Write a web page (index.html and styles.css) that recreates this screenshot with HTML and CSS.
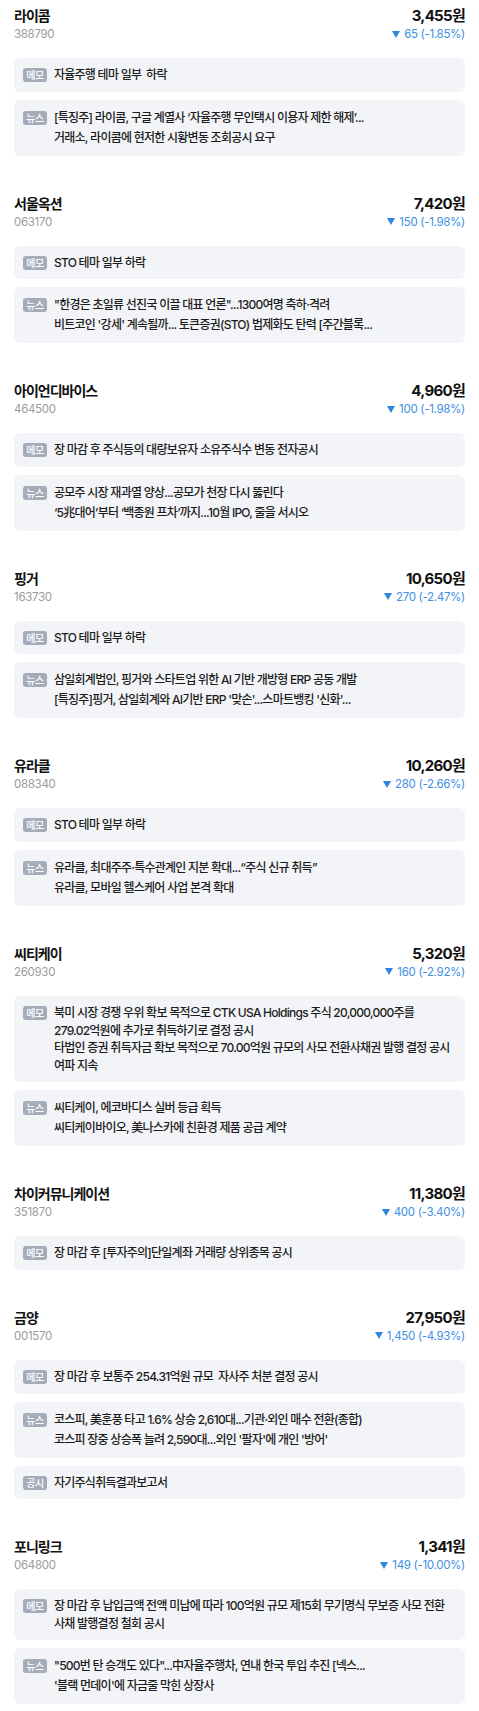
FILE: index.html
```html
<!DOCTYPE html>
<html lang="ko">
<head>
    <meta charset="UTF-8">
    <meta name="viewport" content="width=device-width, initial-scale=1.0">
    <title>관심종목 메모</title>
    <link rel="stylesheet" href="styles.css">
</head>
<body>

<main class="stock-list">

    <section class="stock">
        <div class="stock-head">
            <div class="stock-id">
                <h2 class="stock-name">라이콤</h2>
                <span class="stock-code">388790</span>
            </div>
            <div class="stock-quote">
                <span class="price">3,455원</span>
                <span class="change"><svg class="arrow" viewBox="0 0 8 7"><path d="M0 0H8L4 7Z"/></svg>65 (-1.85%)</span>
            </div>
        </div>
        <div class="notes">
            <div class="note">
                <span class="tag">메모</span>
                <p class="memo">자율주행 테마 일부&nbsp; 하락</p>
            </div>
            <div class="note">
                <span class="tag tag-news">뉴스</span>
                <ul class="headlines">
                    <li>[특징주] 라이콤, 구글 계열사 ‘자율주행 무인택시 이용자 제한 해제’...</li>
                    <li>거래소, 라이콤에 현저한 시황변동 조회공시 요구</li>
                </ul>
            </div>
        </div>
    </section>

    <section class="stock">
        <div class="stock-head">
            <div class="stock-id">
                <h2 class="stock-name">서울옥션</h2>
                <span class="stock-code">063170</span>
            </div>
            <div class="stock-quote">
                <span class="price">7,420원</span>
                <span class="change"><svg class="arrow" viewBox="0 0 8 7"><path d="M0 0H8L4 7Z"/></svg>150 (-1.98%)</span>
            </div>
        </div>
        <div class="notes">
            <div class="note">
                <span class="tag">메모</span>
                <p class="memo">STO 테마 일부 하락</p>
            </div>
            <div class="note">
                <span class="tag tag-news">뉴스</span>
                <ul class="headlines">
                    <li>"한경은 초일류 선진국 이끌 대표 언론"...1300여명 축하·격려</li>
                    <li>비트코인 '강세' 계속될까... 토큰증권(STO) 법제화도 탄력 [주간블록...</li>
                </ul>
            </div>
        </div>
    </section>

    <section class="stock">
        <div class="stock-head">
            <div class="stock-id">
                <h2 class="stock-name">아이언디바이스</h2>
                <span class="stock-code">464500</span>
            </div>
            <div class="stock-quote">
                <span class="price">4,960원</span>
                <span class="change"><svg class="arrow" viewBox="0 0 8 7"><path d="M0 0H8L4 7Z"/></svg>100 (-1.98%)</span>
            </div>
        </div>
        <div class="notes">
            <div class="note">
                <span class="tag">메모</span>
                <p class="memo">장 마감 후 주식등의 대량보유자 소유주식수 변동 전자공시</p>
            </div>
            <div class="note">
                <span class="tag tag-news">뉴스</span>
                <ul class="headlines">
                    <li>공모주 시장 재과열 양상...공모가 천장 다시 뚫린다</li>
                    <li>‘5兆대어’부터 ‘백종원 프차’까지...10월 IPO, 줄을 서시오</li>
                </ul>
            </div>
        </div>
    </section>

    <section class="stock">
        <div class="stock-head">
            <div class="stock-id">
                <h2 class="stock-name">핑거</h2>
                <span class="stock-code">163730</span>
            </div>
            <div class="stock-quote">
                <span class="price">10,650원</span>
                <span class="change"><svg class="arrow" viewBox="0 0 8 7"><path d="M0 0H8L4 7Z"/></svg>270 (-2.47%)</span>
            </div>
        </div>
        <div class="notes">
            <div class="note">
                <span class="tag">메모</span>
                <p class="memo">STO 테마 일부 하락</p>
            </div>
            <div class="note">
                <span class="tag tag-news">뉴스</span>
                <ul class="headlines">
                    <li>삼일회계법인, 핑거와 스타트업 위한 AI 기반 개방형 ERP 공동 개발</li>
                    <li>[특징주]핑거, 삼일회계와 AI기반 ERP '맞손'...스마트뱅킹 '신화'...</li>
                </ul>
            </div>
        </div>
    </section>

    <section class="stock">
        <div class="stock-head">
            <div class="stock-id">
                <h2 class="stock-name">유라클</h2>
                <span class="stock-code">088340</span>
            </div>
            <div class="stock-quote">
                <span class="price">10,260원</span>
                <span class="change"><svg class="arrow" viewBox="0 0 8 7"><path d="M0 0H8L4 7Z"/></svg>280 (-2.66%)</span>
            </div>
        </div>
        <div class="notes">
            <div class="note">
                <span class="tag">메모</span>
                <p class="memo">STO 테마 일부 하락</p>
            </div>
            <div class="note">
                <span class="tag tag-news">뉴스</span>
                <ul class="headlines">
                    <li>유라클, 최대주주·특수관계인 지분 확대...“주식 신규 취득”</li>
                    <li>유라클, 모바일 헬스케어 사업 본격 확대</li>
                </ul>
            </div>
        </div>
    </section>

    <section class="stock">
        <div class="stock-head">
            <div class="stock-id">
                <h2 class="stock-name">씨티케이</h2>
                <span class="stock-code">260930</span>
            </div>
            <div class="stock-quote">
                <span class="price">5,320원</span>
                <span class="change"><svg class="arrow" viewBox="0 0 8 7"><path d="M0 0H8L4 7Z"/></svg>160 (-2.92%)</span>
            </div>
        </div>
        <div class="notes">
            <div class="note">
                <span class="tag">메모</span>
                <p class="memo">북미 시장 경쟁 우위 확보 목적으로 CTK USA Holdings 주식 20,000,000주를<br>279.02억원에 추가로 취득하기로 결정 공시<br>타법인 증권 취득자금 확보 목적으로 70.00억원 규모의 사모 전환사채권 발행 결정 공시<br>여파 지속</p>
            </div>
            <div class="note">
                <span class="tag tag-news">뉴스</span>
                <ul class="headlines">
                    <li>씨티케이, 에코바디스 실버 등급 획득</li>
                    <li>씨티케이바이오, 美나스카에 친환경 제품 공급 계약</li>
                </ul>
            </div>
        </div>
    </section>

    <section class="stock">
        <div class="stock-head">
            <div class="stock-id">
                <h2 class="stock-name">차이커뮤니케이션</h2>
                <span class="stock-code">351870</span>
            </div>
            <div class="stock-quote">
                <span class="price">11,380원</span>
                <span class="change"><svg class="arrow" viewBox="0 0 8 7"><path d="M0 0H8L4 7Z"/></svg>400 (-3.40%)</span>
            </div>
        </div>
        <div class="notes">
            <div class="note">
                <span class="tag">메모</span>
                <p class="memo">장 마감 후 [투자주의]단일계좌 거래량 상위종목 공시</p>
            </div>
        </div>
    </section>

    <section class="stock">
        <div class="stock-head">
            <div class="stock-id">
                <h2 class="stock-name">금양</h2>
                <span class="stock-code">001570</span>
            </div>
            <div class="stock-quote">
                <span class="price">27,950원</span>
                <span class="change"><svg class="arrow" viewBox="0 0 8 7"><path d="M0 0H8L4 7Z"/></svg>1,450 (-4.93%)</span>
            </div>
        </div>
        <div class="notes">
            <div class="note">
                <span class="tag">메모</span>
                <p class="memo">장 마감 후 보통주 254.31억원 규모&nbsp; 자사주 처분 결정 공시</p>
            </div>
            <div class="note">
                <span class="tag tag-news">뉴스</span>
                <ul class="headlines">
                    <li>코스피, 美훈풍 타고 1.6% 상승 2,610대...기관·외인 매수 전환(종합)</li>
                    <li>코스피 장중 상승폭 늘려 2,590대...외인 '팔자'에 개인 '방어'</li>
                </ul>
            </div>
            <div class="note">
                <span class="tag">공시</span>
                <p class="memo">자기주식취득결과보고서</p>
            </div>
        </div>
    </section>

    <section class="stock">
        <div class="stock-head">
            <div class="stock-id">
                <h2 class="stock-name">포니링크</h2>
                <span class="stock-code">064800</span>
            </div>
            <div class="stock-quote">
                <span class="price">1,341원</span>
                <span class="change"><svg class="arrow" viewBox="0 0 8 7"><path d="M0 0H8L4 7Z"/></svg>149 (-10.00%)</span>
            </div>
        </div>
        <div class="notes">
            <div class="note">
                <span class="tag">메모</span>
                <p class="memo">장 마감 후 납입금액 전액 미납에 따라 100억원 규모 제15회 무기명식 무보증 사모 전환<br>사채 발행결정 철회 공시</p>
            </div>
            <div class="note">
                <span class="tag tag-news">뉴스</span>
                <ul class="headlines">
                    <li>"500번 탄 승객도 있다"...中자율주행차, 연내 한국 투입 추진 [넥스...</li>
                    <li>'블랙 먼데이'에 자금줄 막힌 상장사</li>
                </ul>
            </div>
        </div>
    </section>

</main>

</body>
</html>
```

FILE: styles.css
```css
body {
    margin: 0;
    padding: 0;
    background: #fff;
    color: #1c1c1c;
    font-family: Inter, "Noto Sans CJK KR", sans-serif;
}
.stock-list {
    display: flex;
    flex-direction: column;
}
.stock {
    padding: 6px 14px 32px;
}
.stock-head {
    display: flex;
    justify-content: space-between;
    align-items: flex-start;
}
.stock-id,
.stock-quote {
    display: flex;
    flex-direction: column;
}
.stock-quote {
    align-items: flex-end;
}
.stock-name {
    margin: 0;
    font-size: 14px;
    line-height: 20px;
    font-weight: 700;
    letter-spacing: -1px;
    color: #111;
}
.stock-code {
    font-size: 11.5px;
    line-height: 16px;
    letter-spacing: -0.3px;
    color: #9b9b9b;
}
.price {
    font-size: 15px;
    line-height: 20px;
    font-weight: 700;
    letter-spacing: -0.7px;
    color: #111;
}
.change {
    display: flex;
    align-items: center;
    gap: 4px;
    font-size: 11.5px;
    line-height: 16px;
    letter-spacing: -0.3px;
    color: #3d90e4;
}
.arrow {
    width: 8px;
    height: 7px;
    fill: #2f86de;
}
.notes {
    display: flex;
    flex-direction: column;
    gap: 8px;
    margin-top: 16px;
}
.note {
    display: flex;
    align-items: flex-start;
    gap: 7px;
    padding: 8px 9px;
    background-color: #f3f4f7;
    border-radius: 6px;
}
.tag {
    flex: none;
    width: 24px;
    height: 14px;
    margin-top: 2px;
    border-radius: 3px;
    background-color: #a4acba;
    color: #fff;
    font-size: 10px;
    font-weight: 500;
    line-height: 14px;
    letter-spacing: -0.5px;
    text-align: center;
}
.tag-news {
    margin-top: 3px;
}
.memo {
    margin: 0;
    font-size: 12px;
    font-weight: 500;
    line-height: 17.6px;
    letter-spacing: -0.75px;
}
.headlines {
    margin: 0;
    padding: 0;
    list-style: none;
    font-size: 12px;
    font-weight: 500;
    line-height: 20px;
    letter-spacing: -0.75px;
}
```
